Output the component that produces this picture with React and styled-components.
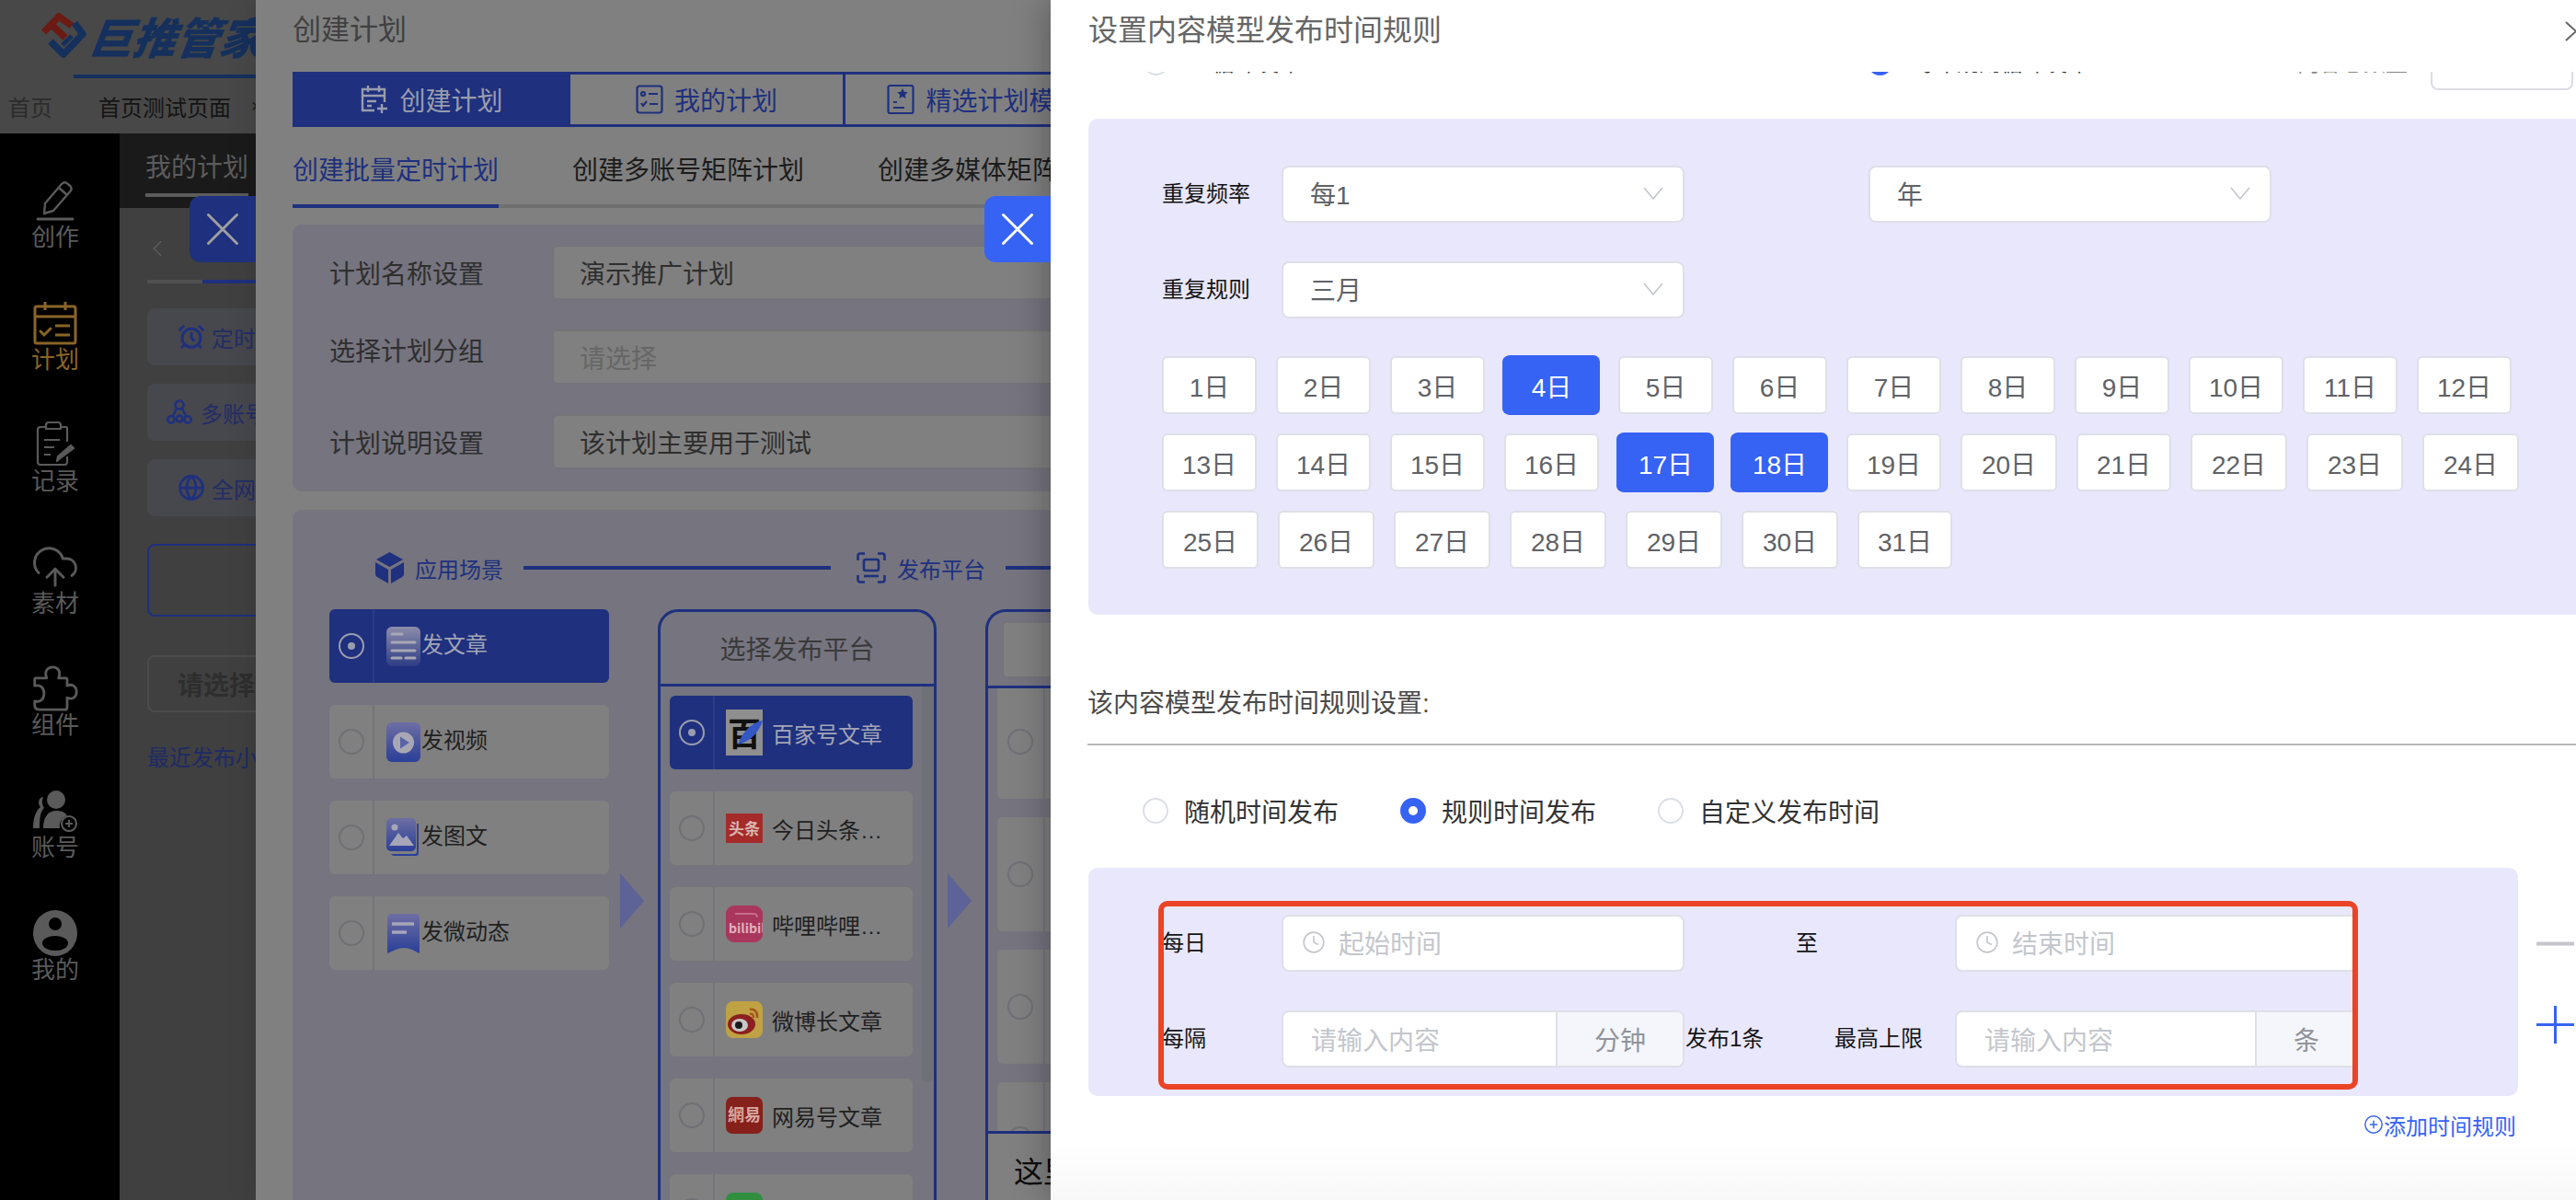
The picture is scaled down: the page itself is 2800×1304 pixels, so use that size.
import React from "react";
import styled, { createGlobalStyle } from "styled-components";
import { AlarmClock, ChevronLeft, CirclePlus, Clock, CloudUpload, Globe, X } from "lucide-react";

const NAVY = "#1e307e";
const BLUE = "#3763f4";
const LAVENDER = "#e9e7fc";
const LAVENDER_DIM = "#75747f";
const DIM_WHITE = "#808080";

const GlobalStyle = createGlobalStyle`
  html, body {
    margin: 0;
    padding: 0;
    background: #404040;
  }
  body {
    font-family: "Liberation Sans", "Noto Sans CJK SC", sans-serif;
  }
  * {
    box-sizing: border-box;
  }
`;

const DAYS = Array.from({ length: 31 }, (_, i) => i + 1);
const ACTIVE_DAYS = [4, 17, 18];
const SCENES = [
  { name: "发文章", icon: "article", active: true },
  { name: "发视频", icon: "video" },
  { name: "发图文", icon: "image" },
  { name: "发微动态", icon: "note" },
];
const PLATFORMS = [
  { name: "百家号文章", logo: "baijia", active: true },
  { name: "今日头条…", logo: "toutiao" },
  { name: "哔哩哔哩…", logo: "bili" },
  { name: "微博长文章", logo: "weibo" },
  { name: "网易号文章", logo: "netease" },
  { name: "", logo: "green" },
];

const PencilIcon = () => (
  <svg width="48" height="44" viewBox="0 0 48 44" fill="none" stroke="currentColor" strokeWidth="2.4" strokeLinejoin="round">
    <path d="M13 25 31 4q3-3 6-.6l3 2.4q3 3 .5 6L22 33l-10 3z" />
    <path d="M28 8l9 8" />
    <path d="M5 42h38" strokeWidth="3" strokeLinecap="round" />
  </svg>
);

const CalendarIcon = () => (
  <svg width="48" height="48" viewBox="0 0 48 48" fill="none" stroke="currentColor" strokeWidth="3">
    <rect x="2" y="6" width="44" height="40" rx="2" />
    <path d="M2 17h44M13 1v9M35 1v9" />
    <path d="M8 33l4 4 7-7" strokeLinecap="round" />
    <path d="M24 27h16M24 37h16" />
  </svg>
);

const ClipboardIcon = () => (
  <svg width="42" height="52" viewBox="0 0 42 52" fill="none" stroke="currentColor" strokeWidth="2.2" strokeLinejoin="round">
    <path d="M11 7H5q-3 0-3 3v35q0 3 3 3h26q3 0 3-3v-6M27 7h6q1 0 1 2v14" />
    <path d="M11 9V5q0-3 3-3h10q3 0 3 3v4z" />
    <path d="M9 21h17M9 29h11M9 37h7" />
    <path d="M26 41l-3 3 1-5 14-12 3 3z" fill="currentColor" />
  </svg>
);

const PuzzleIcon = () => (
  <svg width="52" height="52" viewBox="0 0 56 54" fill="none" stroke="currentColor" strokeWidth="3" strokeLinejoin="round">
    <path d="M5 15h13c-3-8 1-13 7-13s10 5 7 13h8q2 0 2 2v7c6-3 11 1 11 7s-5 10-11 7v11q0 3-3 3H10q-6 0-6-5v-5c7 2 11-3 11-9s-4-11-11-9v-7q0-2 1-2z" />
  </svg>
);

const AccountIcon = () => (
  <svg width="50" height="46" viewBox="0 0 50 46" fill="currentColor">
    <circle cx="26" cy="11" r="10" />
    <path d="M12 42c0-13 6-19 14-19 5 0 9 1 12 5-6 2-9 8-8 14z" />
    <path d="M9 9c-3 4-2 8 0 10-4 3-8 10-8 23h7C8 30 9 24 13 20c-2-3-3-7-1-12z" />
    <circle cx="40" cy="37" r="8" fill="none" stroke="currentColor" strokeWidth="2.2" />
    <path d="M40 33v8M36 37h8" stroke="currentColor" strokeWidth="2" />
  </svg>
);

const ProfileIcon = () => (
  <svg width="48" height="50" viewBox="0 0 48 50">
    <ellipse cx="24" cy="25" rx="24" ry="25" fill="currentColor" />
    <circle cx="24" cy="15" r="7" fill="#000" />
    <ellipse cx="24" cy="36" rx="14" ry="8" fill="#000" />
  </svg>
);

const CalendarPlusIcon = () => (
  <svg width="31" height="32" viewBox="0 0 31 32" fill="none" stroke="currentColor" strokeWidth="2.4">
    <path d="M16 28H3V5h24v14M3 12h24M9 1v7M21 1v7M8 18h10M8 23h5M24 21v10M19 26h11" />
  </svg>
);

const ListCheckIcon = () => (
  <svg width="30" height="32" viewBox="0 0 30 32" fill="none" stroke="currentColor" strokeWidth="2.2">
    <rect x="1.500" y="1.500" width="27" height="29" rx="3" />
    <circle cx="8" cy="10" r="2" />
    <path d="M14 10h10M6 20l2 3 4-5M15 21h9" />
  </svg>
);

const StarDocIcon = () => (
  <svg width="30" height="34" viewBox="0 0 30 34" fill="none" stroke="currentColor" strokeWidth="2.2">
    <rect x="1.500" y="2" width="27" height="30" rx="2" />
    <path d="M17 5l1.800 3.700 4 .6-3 2.800.8 4-3.600-2-3.600 2 .8-4-3-2.800 4-.6z" fill="currentColor" stroke="none" />
    <path d="M7 20h4M7 26h12" />
  </svg>
);

const CubeIcon = () => (
  <svg width="31" height="34" viewBox="0 0 31 34" fill={NAVY}>
    <path d="M15.500 0 30 8l-14.500 8L1 8z" />
    <path d="M0 11l14 8v15L2 27q-2-1-2-3z" />
    <path d="M31 11l-14 8v15l12-7q2-1 2-3z" />
  </svg>
);

const ScanIcon = () => (
  <svg width="32" height="34" viewBox="0 0 32 34" fill="none" stroke={NAVY} strokeWidth="2.6">
    <path d="M1.500 9V4q0-2.500 2.500-2.500h5M23 1.500h5q2.500 0 2.500 2.500v5M30.500 25v5q0 2.500-2.500 2.500h-5M9 32.500H4q-2.500 0-2.500-2.500v-5" />
    <rect x="8" y="8" width="16" height="12" rx="2" />
    <path d="M8 26h16" />
  </svg>
);

const NetworkIcon = () => (
  <svg width="28" height="28" viewBox="0 0 28 28" fill="none" stroke={NAVY} strokeWidth="2.6">
    <circle cx="14" cy="6" r="4.500" />
    <circle cx="5" cy="22" r="3.700" />
    <circle cx="14" cy="21" r="3.400" />
    <circle cx="23" cy="22" r="3.700" />
    <path d="M11 10 7 18M17 10l4 8" />
  </svg>
);

const SelectChevron = () => (
  <svg width="22" height="14" viewBox="0 0 22 14" fill="none" stroke="#c0c4cc" strokeWidth="1.500">
    <path d="M1 1l10 12L21 1" />
  </svg>
);

const LogoMark = () => (
  <svg width="50" height="50" viewBox="0 0 50 50" fill="none" strokeWidth="7.500" strokeLinejoin="round">
    <path d="M3.500 21 20 4l14 10M12 13l15 14" stroke="#6b1a14" />
    <path d="M37 11l9 12-21 22L11 31" stroke="#14305c" />
    <path d="M24 35l10-10" stroke="#14305c" strokeWidth="5" />
  </svg>
);

const SceneIcon = ({ type, id }) => (
  <svg width="37" height="43" viewBox="0 0 37 43">
    <defs>
      <linearGradient id={id} x1="0" y1="0" x2="0" y2="1">
        <stop offset="0" stopColor={type === "article" ? "#8d8daa" : "#6e6ea4"} />
        <stop offset="1" stopColor={type === "article" ? "#2d3c85" : "#2a3f98"} />
      </linearGradient>
    </defs>
    {type === "image" ? (
      <>
        <path d="M35 6v32q0 3-3 3H9q-3 0-4-2h26q2 0 2-2V6z" fill="#2a3f98" />
        <rect x="0" y="0" width="32" height="36" rx="5" fill={`url(#${id})`} />
        <circle cx="9" cy="10" r="3.500" fill="#a6a6b8" />
        <path d="M3 30 13 16l5 6 4-3 8 11z" fill="#a6a6b8" />
      </>
    ) : type === "note" ? (
      <>
        <path d="M1 5q0-5 5-5h26q4 0 4 5v38l-8-4q-9-4-18 0l-9 4z" fill={`url(#${id})`} />
        <path d="M6 11h24" stroke="#a6a6b8" strokeWidth="3.500" />
        <path d="M6 20h16" stroke="#a6a6b8" strokeWidth="3.500" />
      </>
    ) : (
      <>
        <rect width="37" height="43" rx="6" fill={`url(#${id})`} />
        {type === "video" ? (
          <>
            <circle cx="18.500" cy="22" r="11.500" fill="#a8a8b4" />
            <path d="M15 15.500 25 22l-10 6.500z" fill="#5a62a8" />
          </>
        ) : (
          <path d="M6 8h11M6 17h25M6 26h25M6 34h10M21 34h10" stroke="#a8a8b4" strokeWidth="3" strokeLinecap="round" />
        )}
      </>
    )}
  </svg>
);

const LogoText = styled.text`
  font-family: "Noto Sans CJK SC", sans-serif;
  font-weight: 700;
`;

const PlatformLogo = ({ type }) => {
  if (type === "baijia") {
    return (
      <svg width="40" height="50" viewBox="0 0 40 50">
        <rect width="40" height="50" fill="#8f8f8f" />
        <LogoText x="2" y="40" fontSize="36" fill="#101010">百</LogoText>
        <path d="M40 12C28 14 18 24 13 38c10-2 22-10 27-26z" fill="#3357c4" />
      </svg>
    );
  }
  if (type === "toutiao") {
    return (
      <svg width="40" height="32" viewBox="0 0 40 32">
        <rect width="40" height="32" fill="#a52a2a" />
        <LogoText x="3" y="23" fontSize="17" fill="#d8b8b0">头条</LogoText>
      </svg>
    );
  }
  if (type === "bili") {
    return (
      <svg width="40" height="40" viewBox="0 0 40 40">
        <rect width="40" height="40" rx="9" fill="#a9375d" />
        <path d="M10 9h20q4 0 4 4" fill="none" stroke="#c66a88" strokeWidth="2" />
        <LogoText x="3" y="30" fontSize="14" fill="#e0b0bf">bilibili</LogoText>
      </svg>
    );
  }
  if (type === "weibo") {
    return (
      <svg width="40" height="40" viewBox="0 0 40 40">
        <rect width="40" height="40" rx="8" fill="#c0a143" />
        <ellipse cx="17" cy="25" rx="15" ry="11" fill="#8c1f1f" />
        <ellipse cx="15" cy="26" rx="9" ry="7" fill="#c9c9c9" />
        <circle cx="14" cy="26" r="4" fill="#1a1a1a" />
        <path d="M26 9c5-1 9 3 8 9M26 14c3-1 4 1 4 4" fill="none" stroke="#a5561c" strokeWidth="2.500" />
      </svg>
    );
  }
  if (type === "netease") {
    return (
      <svg width="40" height="40" viewBox="0 0 40 40">
        <rect width="40" height="40" rx="7" fill="#86201a" />
        <LogoText x="2" y="26" fontSize="18" fill="#d8a8a0">網易</LogoText>
      </svg>
    );
  }
  return (
    <svg width="40" height="40" viewBox="0 0 40 40">
      <rect width="40" height="40" rx="8" fill="#2f8f3f" />
    </svg>
  );
};

const DayPicker = () => (
  <DayGrid>
    {DAYS.map((day) => (
      <DayButton key={day} $active={ACTIVE_DAYS.includes(day)} $wide={day >= 20 && day % 10 !== 1}>
        {day}日
      </DayButton>
    ))}
  </DayGrid>
);

const NAV_ITEMS = [
  { label: "创作", icon: <PencilIcon /> },
  { label: "计划", icon: <CalendarIcon />, active: true },
  { label: "记录", icon: <ClipboardIcon /> },
  { label: "素材", icon: <CloudUpload size={54} strokeWidth={1.300} /> },
  { label: "组件", icon: <PuzzleIcon /> },
  { label: "账号", icon: <AccountIcon /> },
  { label: "我的", icon: <ProfileIcon /> },
];

const App = () => {
  return (
    <Screen>
      <GlobalStyle />
      <Header>
        <LogoRow>
          <LogoMark />
          <LogoName>巨推管家</LogoName>
        </LogoRow>
        <TabAccent />
        <PageTabs>
          <PageTab>首页</PageTab>
          <PageTab $current>首页测试页面</PageTab>
          <TabClose>×</TabClose>
        </PageTabs>
      </Header>
      <Main>
        <Sidebar>
          {NAV_ITEMS.map((item) => (
            <NavItem key={item.label} $active={item.active}>
              <NavIcon>{item.icon}</NavIcon>
              <NavLabel>{item.label}</NavLabel>
            </NavItem>
          ))}
        </Sidebar>
        <Content>
          <ContentTop>
            <ContentTitle>我的计划</ContentTitle>
          </ContentTop>
          <ContentBody>
            <PagerRow>
              <ChevronLeft size={30} strokeWidth={1.200} />
            </PagerRow>
            <PagerLine />
            <ModeButton>
              <AlarmClock size={30} strokeWidth={2.400} color={NAVY} />
              定时发布
            </ModeButton>
            <ModeButton $shift>
              <NetworkIcon />
              多账号发布
            </ModeButton>
            <ModeButton>
              <Globe size={30} strokeWidth={2.200} color={NAVY} />
              全网发布
            </ModeButton>
            <OutlineBox />
            <GhostSelect>请选择分组</GhostSelect>
            <RecentLink>最近发布小时</RecentLink>
          </ContentBody>
        </Content>
      </Main>

      <PlanDrawer>
        <DrawerClose $dim>
          <X size={62} strokeWidth={1.100} />
        </DrawerClose>
        <PlanInner>
          <PlanTitle>创建计划</PlanTitle>
          <PlanTabs>
            <PlanTab $width={302} $active>
              <CalendarPlusIcon />
              创建计划
            </PlanTab>
            <PlanTab $width={299}>
              <ListCheckIcon />
              我的计划
            </PlanTab>
            <PlanTab $width={304}>
              <StarDocIcon />
              精选计划模板
            </PlanTab>
          </PlanTabs>
          <SubTabs>
            <SubTab $active>创建批量定时计划</SubTab>
            <SubTab>创建多账号矩阵计划</SubTab>
            <SubTab>创建多媒体矩阵计划</SubTab>
          </SubTabs>
          <PlanCard>
            <PlanRow>
              <PlanLabel>计划名称设置</PlanLabel>
              <PlanInput>演示推广计划</PlanInput>
            </PlanRow>
            <PlanRow>
              <PlanLabel $raised>选择计划分组</PlanLabel>
              <PlanInput $placeholder>请选择</PlanInput>
            </PlanRow>
            <PlanRow>
              <PlanLabel>计划说明设置</PlanLabel>
              <PlanInput>该计划主要用于测试</PlanInput>
            </PlanRow>
          </PlanCard>
          <FlowCard>
            <Steps>
              <CubeIcon />
              <StepName>应用场景</StepName>
              <StepLine $width={334} />
              <ScanIcon />
              <StepName>发布平台</StepName>
              <StepLine $width={120} />
            </Steps>
            <Columns>
              <SceneList>
                {SCENES.map((scene) => (
                  <OptionItem key={scene.name} $active={scene.active}>
                    <RadioCell $width={49} $active={scene.active}>
                      <DimRadio $active={scene.active} />
                    </RadioCell>
                    <SceneIconBox>
                      <SceneIcon type={scene.icon} id={`scene-${scene.icon}`} />
                    </SceneIconBox>
                    <SceneName $active={scene.active}>{scene.name}</SceneName>
                  </OptionItem>
                ))}
              </SceneList>
              <FlowArrow />
              <PlatformBox>
                <PlatformHead>选择发布平台</PlatformHead>
                <PlatformList>
                  {PLATFORMS.map((platform) => (
                    <OptionItem key={platform.logo} $active={platform.active}>
                      <RadioCell $width={49} $active={platform.active}>
                        <DimRadio $active={platform.active} />
                      </RadioCell>
                      <LogoCell>
                        <PlatformLogo type={platform.logo} />
                      </LogoCell>
                      <PlatformName $active={platform.active}>{platform.name}</PlatformName>
                    </OptionItem>
                  ))}
                </PlatformList>
                <ScrollThumb />
              </PlatformBox>
              <FlowArrow />
              <ModelBox>
                <ModelHead>
                  <ModelSearch />
                </ModelHead>
                <ModelList>
                  {[0, 1, 2, 3].map((n) => (
                    <ModelItem key={n}>
                      <RadioCell $width={52}>
                        <DimRadio />
                      </RadioCell>
                    </ModelItem>
                  ))}
                </ModelList>
                <ModelFoot>这里</ModelFoot>
              </ModelBox>
            </Columns>
          </FlowCard>
        </PlanInner>
      </PlanDrawer>

      <RuleDrawer>
        <DrawerClose>
          <X size={62} strokeWidth={1.100} />
        </DrawerClose>
        <RuleTitleBar>
          <RuleTitle>设置内容模型发布时间规则</RuleTitle>
          <TitleClose>
            <svg width="24" height="22" viewBox="0 0 24 22" fill="none" stroke="#666" strokeWidth="2">
              <path d="M1 1l22 20M23 1 1 21" />
            </svg>
          </TitleClose>
        </RuleTitleBar>
        <PeekRow>
          <PeekRadio $left={101} />
          <PeekText $left={48} $width={100}>循环发布</PeekText>
          <PeekRadio $left={612} $checked />
          <PeekText $left={22} $width={192}>每年规则循环发布</PeekText>
          <PeekText $left={226} $width={120} $muted>内容总数量</PeekText>
          <PeekInput />
        </PeekRow>
        <RepeatCard>
          <RepeatRow>
            <FieldLabel>重复频率</FieldLabel>
            <SelectBox>
              每1
              <SelectChevron />
            </SelectBox>
            <SelectBox $gap={200}>
              年
              <SelectChevron />
            </SelectBox>
          </RepeatRow>
          <RepeatRow>
            <FieldLabel>重复规则</FieldLabel>
            <SelectBox>
              三月
              <SelectChevron />
            </SelectBox>
          </RepeatRow>
          <DayPicker />
        </RepeatCard>
        <SectionHeading>该内容模型发布时间规则设置:</SectionHeading>
        <RadioRow>
          <RadioOption>
            <RuleRadio />
            随机时间发布
          </RadioOption>
          <RadioOption>
            <RuleRadio $checked />
            规则时间发布
          </RadioOption>
          <RadioOption>
            <RuleRadio />
            自定义发布时间
          </RadioOption>
        </RadioRow>
        <RuleBlock>
          <RuleCard>
            <RuleGrid>
              <FieldLabel>每日</FieldLabel>
              <TimeInput>
                <Clock size={26} strokeWidth={1.500} color="#c4c6cc" />
                起始时间
              </TimeInput>
              <RuleMiddle $indent={121}>
                <InlineLabel>至</InlineLabel>
              </RuleMiddle>
              <TimeInput>
                <Clock size={26} strokeWidth={1.500} color="#c4c6cc" />
                结束时间
              </TimeInput>
              <FieldLabel>每隔</FieldLabel>
              <UnitInput>
                <UnitPlaceholder>请输入内容</UnitPlaceholder>
                <UnitAddon $width={138}>分钟</UnitAddon>
              </UnitInput>
              <RuleMiddle>
                <InlineLabel>发布1条</InlineLabel>
                <InlineLabel>最高上限</InlineLabel>
              </RuleMiddle>
              <UnitInput>
                <UnitPlaceholder>请输入内容</UnitPlaceholder>
                <UnitAddon $width={110}>条</UnitAddon>
              </UnitInput>
            </RuleGrid>
            <RedMark />
          </RuleCard>
          <RuleActions>
            <svg width="41" height="41" viewBox="0 0 41 41" stroke="#c4c6cc" strokeWidth="4">
              <path d="M0 20.500h41" />
            </svg>
            <svg width="41" height="41" viewBox="0 0 41 41" stroke={BLUE} strokeWidth="3">
              <path d="M0 20.500h41M20.500 0v41" />
            </svg>
          </RuleActions>
        </RuleBlock>
        <AddRuleRow>
          <CirclePlus size={22} strokeWidth={1.600} />
          添加时间规则
        </AddRuleRow>
      </RuleDrawer>
    </Screen>
  );
};

export default App;

const Screen = styled.div`
  position: relative;
  width: 2800px;
  height: 1304px;
  overflow: hidden;
  background: #404040;
`;

const Header = styled.div`
  height: 145px;
  background: #484848;
`;

const LogoRow = styled.div`
  height: 81px;
  display: flex;
  align-items: center;
  padding: 0 0 4px 44px;
`;

const LogoName = styled.div`
  margin-left: 4px;
  font-family: "Noto Sans CJK SC", sans-serif;
  font-size: 47px;
  line-height: 50px;
  font-weight: 900;
  font-style: italic;
  color: #15305c;
  white-space: nowrap;
  transform: skewX(-8deg);
`;

const TabAccent = styled.div`
  width: 198px;
  height: 4px;
  margin-left: 80px;
  background: #14305f;
`;

const PageTabs = styled.div`
  height: 60px;
  display: flex;
  align-items: center;
  padding-left: 9px;
  font-size: 24px;
`;

const PageTab = styled.div`
  margin-right: ${({ $current }) => ($current ? "22px" : "50px")};
  color: ${({ $current }) => ($current ? "#141414" : "#2c2c2c")};
  white-space: nowrap;
`;

const TabClose = styled.span`
  font-size: 20px;
  color: #181818;
`;

const Main = styled.div`
  display: flex;
  height: 1159px;
`;

const Sidebar = styled.nav`
  width: 130px;
  flex: none;
  background: #000;
  padding: 51px 10px 0 0;
`;

const NavItem = styled.div`
  height: 132.6px;
  display: flex;
  flex-direction: column;
  align-items: center;
  color: ${({ $active }) => ($active ? "#8a6427" : "#5a5a5a")};
`;

const NavIcon = styled.div`
  height: 44px;
  display: flex;
  align-items: center;
  justify-content: center;
  margin-bottom: 4px;
`;

const NavLabel = styled.div`
  font-size: 26px;
  line-height: 28px;
`;

const Content = styled.div`
  flex: 1;
  background: #404040;
`;

const ContentTop = styled.div`
  height: 81px;
  background: #1a1a1a;
  padding: 18px 0 0 28px;
`;

const ContentTitle = styled.div`
  width: 112px;
  font-size: 28px;
  line-height: 40px;
  padding-bottom: 7px;
  color: #5c5c5c;
  border-bottom: 4px solid #5c5c5c;
  white-space: nowrap;
`;

const ContentBody = styled.div`
  width: 400px;
  padding-left: 30px;
  display: flex;
  flex-direction: column;
  align-items: flex-start;
`;

const PagerRow = styled.div`
  height: 78px;
  margin-left: -4px;
  display: flex;
  align-items: center;
  color: #5c5c5c;
  padding-top: 10px;
`;

const PagerLine = styled.div`
  width: 200px;
  height: 4px;
  background: linear-gradient(to right, #505050 60px, ${NAVY} 60px);
  margin-bottom: 27px;
`;

const ModeButton = styled.div`
  width: 360px;
  height: 62px;
  margin-bottom: 20px;
  padding-left: ${({ $shift }) => ($shift ? "21px" : "33px")};
  display: flex;
  align-items: center;
  gap: ${({ $shift }) => ($shift ? "9px" : "7px")};
  background: #47474e;
  border-radius: 8px;
  font-size: 24px;
  color: #232d66;
  white-space: nowrap;
`;

const OutlineBox = styled.div`
  width: 360px;
  height: 79px;
  margin: 10px 0 42px;
  border: 2px solid ${NAVY};
  border-radius: 8px;
`;

const GhostSelect = styled.div`
  width: 360px;
  height: 62px;
  padding-left: 31px;
  display: flex;
  align-items: center;
  border: 2px solid #4c4c4c;
  border-radius: 8px;
  font-size: 28px;
  font-weight: 700;
  color: #2e2e2e;
  white-space: nowrap;
`;

const RecentLink = styled.div`
  margin-top: 34px;
  font-size: 24px;
  line-height: 32px;
  color: #1e2a66;
  white-space: nowrap;
`;

const PlanDrawer = styled.div`
  position: absolute;
  top: 0;
  bottom: 0;
  left: 278px;
  width: 864px;
  background: ${DIM_WHITE};
  box-shadow: 0 0 30px rgba(0, 0, 0, 0.15);
`;

const PlanInner = styled.div`
  height: 100%;
  width: 100%;
  overflow: hidden;
  padding-left: 40px;
`;

const DrawerClose = styled.div`
  position: absolute;
  top: 213px;
  left: -72px;
  width: 72px;
  height: 72px;
  display: flex;
  align-items: center;
  justify-content: center;
  border-radius: 12px 0 0 12px;
  background: ${({ $dim }) => ($dim ? NAVY : BLUE)};
  color: ${({ $dim }) => ($dim ? "#a0a0a0" : "#fff")};
`;

const PlanTitle = styled.div`
  height: 78px;
  width: 400px;
  padding-top: 8px;
  font-size: 31px;
  line-height: 50px;
  color: #404040;
`;

const PlanTabs = styled.div`
  display: flex;
  width: 1000px;
  height: 60px;
`;

const PlanTab = styled.div`
  width: ${({ $width }) => $width}px;
  flex: none;
  display: flex;
  align-items: center;
  justify-content: center;
  gap: 12px;
  font-size: 28px;
  white-space: nowrap;
  background: ${({ $active }) => ($active ? NAVY : DIM_WHITE)};
  color: ${({ $active }) => ($active ? "#9a9dad" : NAVY)};
  border: 3px solid ${NAVY};
  border-left-width: ${({ $active }) => ($active ? "3px" : "0")};
`;

const SubTabs = styled.div`
  display: flex;
  gap: 80px;
  width: 1000px;
  height: 88px;
  padding-top: 24px;
  border-bottom: 4px solid #707070;
`;

const SubTab = styled.div`
  height: 64px;
  font-size: 28px;
  line-height: 48px;
  white-space: nowrap;
  color: ${({ $active }) => ($active ? NAVY : "#1c1c1c")};
  border-bottom: 4px solid ${({ $active }) => ($active ? NAVY : "transparent")};
`;

const PlanCard = styled.div`
  width: 1100px;
  height: 290px;
  margin-top: 18px;
  padding: 22px 0 0 40px;
  display: flex;
  flex-direction: column;
  gap: 32px;
  background: ${LAVENDER_DIM};
  border-radius: 10px;
`;

const PlanRow = styled.div`
  display: flex;
  align-items: center;
`;

const PlanLabel = styled.div`
  width: 242px;
  margin-bottom: ${({ $raised }) => ($raised ? "16px" : "0")};
  font-size: 28px;
  color: #2f2f2f;
`;

const PlanInput = styled.div`
  width: 700px;
  height: 60px;
  padding-left: 28px;
  display: flex;
  align-items: center;
  font-size: 28px;
  color: ${({ $placeholder }) => ($placeholder ? "#666" : "#2e2e2e")};
  background: ${DIM_WHITE};
  border: 2px solid #74747a;
  border-radius: 6px;
`;

const FlowCard = styled.div`
  width: 1100px;
  height: 760px;
  margin-top: 20px;
  padding: 45px 0 0 40px;
  background: ${LAVENDER_DIM};
  border-radius: 10px 10px 0 0;
`;

const Steps = styled.div`
  height: 36px;
  display: flex;
  align-items: center;
  padding-left: 50px;
`;

const StepName = styled.div`
  margin-left: 12px;
  font-size: 24px;
  color: ${NAVY};
  white-space: nowrap;
`;

const StepLine = styled.div`
  width: ${({ $width }) => $width}px;
  height: 4px;
  margin: 0 28px 0 22px;
  background: ${NAVY};
`;

const Columns = styled.div`
  display: flex;
  margin-top: 27px;
  align-items: flex-start;
`;

const SceneList = styled.div`
  width: 304px;
  flex: none;
  display: flex;
  flex-direction: column;
  gap: 24px;
`;

const OptionItem = styled.div`
  height: 80px;
  flex: none;
  display: flex;
  align-items: center;
  border-radius: 6px;
  background: ${({ $active }) => ($active ? NAVY : DIM_WHITE)};
`;

const RadioCell = styled.div`
  width: ${({ $width }) => $width}px;
  height: 100%;
  flex: none;
  display: flex;
  align-items: center;
  justify-content: center;
  border-right: 2px solid ${({ $active }) => ($active ? "#2b3c88" : "#74747c")};
`;

const DimRadio = styled.div`
  width: 28px;
  height: 28px;
  border-radius: 50%;
  display: flex;
  align-items: center;
  justify-content: center;
  border: 2px solid ${({ $active }) => ($active ? "#9a9dad" : "#6f6f75")};
  &::after {
    content: "";
    width: 8px;
    height: 8px;
    border-radius: 50%;
    background: ${({ $active }) => ($active ? "#9a9dad" : "transparent")};
  }
`;

const SceneIconBox = styled.div`
  margin-left: 13px;
  width: 38px;
  display: flex;
`;

const SceneName = styled.div`
  font-size: 24px;
  line-height: 32px;
  margin-bottom: 2px;
  color: ${({ $active }) => ($active ? "#a3a5b5" : "#1f1f1f")};
  white-space: nowrap;
`;

const FlowArrow = styled.div`
  width: 0;
  height: 0;
  flex: none;
  margin: 287px 15px 0 12px;
  border-style: solid;
  border-width: 30px 0 30px 26px;
  border-color: transparent transparent transparent #5d6297;
`;

const PlatformBox = styled.div`
  position: relative;
  width: 303px;
  height: 720px;
  flex: none;
  border: 3px solid ${NAVY};
  border-radius: 22px;
  overflow: hidden;
`;

const PlatformHead = styled.div`
  height: 81px;
  display: flex;
  align-items: center;
  justify-content: center;
  font-size: 28px;
  color: #3a3a3a;
  border-bottom: 3px solid ${NAVY};
`;

const PlatformList = styled.div`
  padding: 10px 0 0 10px;
  width: 274px;
  display: flex;
  flex-direction: column;
  gap: 24px;
`;

const LogoCell = styled.div`
  margin-left: 12px;
  width: 40px;
  display: flex;
  justify-content: center;
  flex: none;
`;

const PlatformName = styled.div`
  margin-left: 10px;
  font-size: 24px;
  color: ${({ $active }) => ($active ? "#a3a5b5" : "#1f1f1f")};
  white-space: nowrap;
`;

const ScrollThumb = styled.div`
  position: absolute;
  top: 81px;
  right: 1px;
  width: 12px;
  height: 430px;
  background: #6f6f78;
  border-radius: 0 0 6px 6px;
`;

const ModelBox = styled.div`
  width: 320px;
  height: 720px;
  flex: none;
  border: 3px solid ${NAVY};
  border-right: 0;
  border-radius: 22px 0 0 22px;
  overflow: hidden;
`;

const ModelHead = styled.div`
  height: 83px;
  padding: 10px 0 0 15px;
  border-bottom: 3px solid ${NAVY};
`;

const ModelSearch = styled.div`
  width: 300px;
  height: 62px;
  background: ${DIM_WHITE};
  border: 2px solid #74747a;
  border-radius: 6px;
`;

const ModelList = styled.div`
  height: 481px;
  overflow: hidden;
  padding-left: 10px;
  display: flex;
  flex-direction: column;
  gap: 20px;
`;

const ModelItem = styled.div`
  width: 280px;
  height: 124px;
  flex: none;
  margin-top: -4px;
  background: ${DIM_WHITE};
  border-radius: 6px;
  margin-bottom: 4px;
`;

const ModelFoot = styled.div`
  height: 120px;
  padding: 20px 0 0 28px;
  font-size: 32px;
  line-height: 44px;
  color: #0c0c0c;
  background: ${DIM_WHITE};
  border-top: 3px solid ${NAVY};
`;

const RuleDrawer = styled.div`
  position: absolute;
  top: 0;
  bottom: 0;
  left: 1142px;
  right: 0;
  background: linear-gradient(to bottom, #fff 1240px, #f8f8f8 100%);
  box-shadow: -4px 0 36px rgba(0, 0, 0, 0.28);
`;

const RuleTitleBar = styled.div`
  height: 78px;
  padding-left: 41px;
  display: flex;
  justify-content: space-between;
`;

const RuleTitle = styled.div`
  font-size: 32px;
  line-height: 66px;
  color: #666;
`;

const TitleClose = styled.div`
  width: 12px;
  height: 22px;
  margin-top: 23px;
  flex: none;
  overflow: hidden;
`;

const PeekRow = styled.div`
  height: 20px;
  margin-bottom: 31px;
  display: flex;
  align-items: flex-end;
  overflow: hidden;
`;

const PeekRadio = styled.div`
  width: 27px;
  height: 27px;
  flex: none;
  margin: 0 0 16px ${({ $left }) => $left}px;
  border-radius: 50%;
  background: ${({ $checked }) => ($checked ? BLUE : "#fff")};
  border: 2px solid ${({ $checked }) => ($checked ? BLUE : "#dcdfe6")};
`;

const PeekText = styled.div`
  width: ${({ $width }) => $width}px;
  flex: none;
  margin: 0 0 18px ${({ $left }) => $left}px;
  font-size: 24px;
  line-height: 22px;
  white-space: nowrap;
  color: ${({ $muted }) => ($muted ? "#888" : "#333")};
`;

const PeekInput = styled.div`
  width: 155px;
  height: 62px;
  flex: none;
  margin-left: 25px;
  background: #fff;
  border: 2px solid #dcdce4;
  border-radius: 8px;
`;

const RepeatCard = styled.div`
  height: 539px;
  margin-left: 41px;
  padding: 51px 0 0 80px;
  background: ${LAVENDER};
  border-radius: 10px 0 0 10px;
  display: flex;
  flex-direction: column;
  gap: 42px;
`;

const RepeatRow = styled.div`
  display: flex;
  align-items: center;
`;

const FieldLabel = styled.div`
  width: 130px;
  flex: none;
  font-size: 24px;
  line-height: 30px;
  color: #141414;
  white-space: nowrap;
`;

const SelectBox = styled.div`
  width: 438px;
  height: 62px;
  flex: none;
  margin-left: ${({ $gap }) => $gap || 0}px;
  padding: 0 21px 2px 29px;
  display: flex;
  align-items: center;
  justify-content: space-between;
  background: #fff;
  border: 2px solid #dfdfe8;
  border-radius: 8px;
  font-size: 28px;
  color: #606266;
`;

const DayGrid = styled.div`
  width: 1500px;
  margin-top: -1px;
  display: flex;
  flex-wrap: wrap;
  gap: 21px;
`;

const DayButton = styled.div`
  width: ${({ $wide }) => ($wide ? "105px" : "103px")};
  height: 63px;
  flex: none;
  display: flex;
  align-items: center;
  justify-content: center;
  font-size: 28px;
  border-radius: 6px;
  background: ${({ $active }) => ($active ? BLUE : "#fff")};
  color: ${({ $active }) => ($active ? "#fff" : "#606266")};
  border: 2px solid ${({ $active }) => ($active ? BLUE : "#dfdfe8")};
  box-shadow: ${({ $active }) => ($active ? `0 0 0 1px ${BLUE}, -2px 0 0 0 ${BLUE}` : "none")};
`;

const SectionHeading = styled.div`
  margin-left: 40px;
  padding-top: 72px;
  height: 142px;
  font-size: 28px;
  line-height: 50px;
  color: #4a4a4a;
  border-bottom: 2px solid #b8b8b8;
`;

const RadioRow = styled.div`
  height: 54px;
  margin-top: 44px;
  padding-left: 100px;
  display: flex;
  align-items: center;
  gap: 67px;
`;

const RadioOption = styled.div`
  display: flex;
  align-items: center;
  gap: 17px;
  font-size: 28px;
  color: #333;
  white-space: nowrap;
`;

const RuleRadio = styled.div`
  width: 28px;
  height: 28px;
  border-radius: 50%;
  display: flex;
  align-items: center;
  justify-content: center;
  border: 2px solid ${({ $checked }) => ($checked ? BLUE : "#dcdfe6")};
  background: ${({ $checked }) => ($checked ? BLUE : "#fff")};
  &::after {
    content: "";
    width: 10px;
    height: 10px;
    border-radius: 50%;
    background: #fff;
  }
`;

const RuleBlock = styled.div`
  display: flex;
  margin: 35px 0 0 41px;
`;

const RuleCard = styled.div`
  position: relative;
  width: 1554px;
  height: 248px;
  padding: 51px 0 0 80px;
  background: ${LAVENDER};
  border-radius: 10px;
`;

const RuleGrid = styled.div`
  display: grid;
  grid-template-columns: 130px 438px 294px 438px;
  grid-auto-rows: 62px;
  row-gap: 42px;
  align-items: center;
`;

const TimeInput = styled.div`
  height: 62px;
  padding: 0 0 2px 20px;
  display: flex;
  align-items: center;
  gap: 14px;
  font-size: 28px;
  color: #c4c6cc;
  background: #fff;
  border: 2px solid #dfdfe8;
  border-radius: 8px;
`;

const RuleMiddle = styled.div`
  display: flex;
  justify-content: ${({ $indent }) => ($indent ? "flex-start" : "space-between")};
  padding: ${({ $indent }) => ($indent ? `0 0 0 ${$indent}px` : "0 35px 0 1px")};
`;

const InlineLabel = styled.div`
  font-size: 24px;
  line-height: 30px;
  color: #141414;
  white-space: nowrap;
`;

const UnitInput = styled.div`
  height: 62px;
  display: flex;
  background: #fff;
  border: 2px solid #dfdfe8;
  border-radius: 8px;
  overflow: hidden;
`;

const UnitPlaceholder = styled.div`
  flex: 1;
  padding-left: 30px;
  display: flex;
  align-items: center;
  font-size: 28px;
  color: #c4c6cc;
`;

const UnitAddon = styled.div`
  width: ${({ $width }) => $width}px;
  flex: none;
  display: flex;
  align-items: center;
  justify-content: center;
  font-size: 28px;
  color: #909399;
  background: #f5f6fb;
  border-left: 2px solid #dfdfe8;
`;

const RedMark = styled.div`
  position: absolute;
  top: 36px;
  left: 76px;
  width: 1304px;
  height: 205px;
  border: 6px solid #ea4427;
  border-radius: 10px;
  pointer-events: none;
`;

const RuleActions = styled.div`
  margin-left: 20px;
  padding-top: 62px;
  display: flex;
  flex-direction: column;
  gap: 47px;
  width: 41px;
  flex: none;
`;

const AddRuleRow = styled.div`
  width: 1554px;
  height: 30px;
  margin: 16px 0 0 41px;
  padding-right: 2px;
  display: flex;
  align-items: center;
  justify-content: flex-end;
  font-size: 24px;
  color: ${BLUE};
`;
